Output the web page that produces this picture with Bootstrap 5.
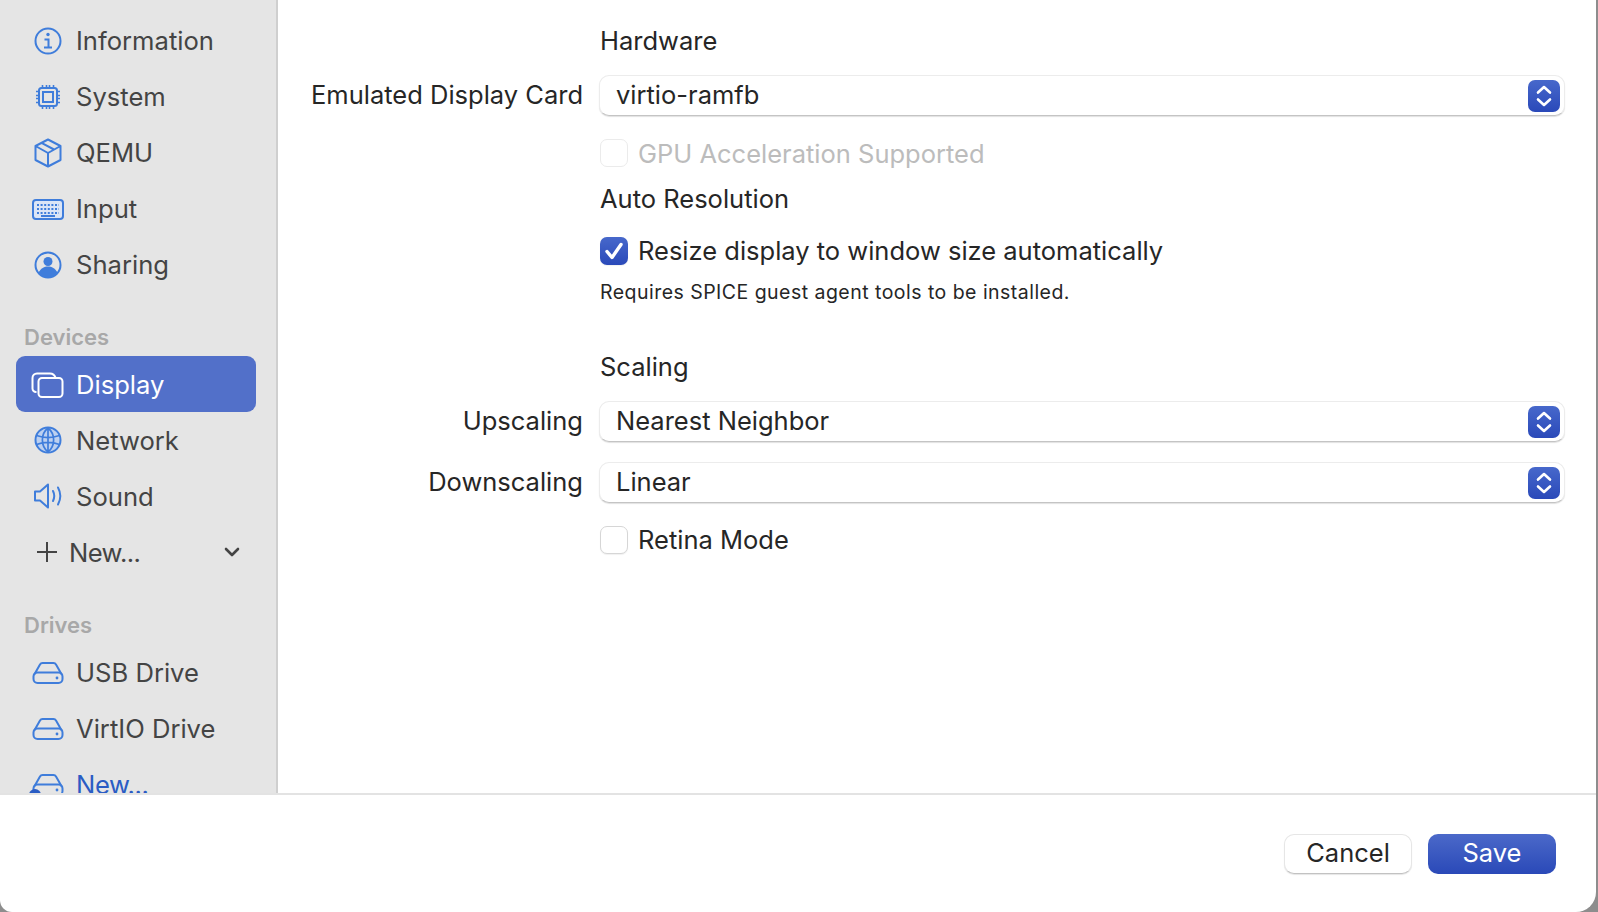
<!DOCTYPE html>
<html lang="en">
<head>
<meta charset="utf-8">
<title>Display settings</title>
<link href="https://cdn.jsdelivr.net/npm/bootstrap@5.3.0/dist/css/bootstrap.min.css" rel="stylesheet">
<style>
html,body{height:100%;}
body{background:#8d8d8d;font-family:Inter,"Liberation Sans",sans-serif;color:#262626;overflow:hidden;}
.win{width:1596px;height:912px;background:#fff;border-radius:0 0 20px 12px;overflow:hidden;}
.upper{height:793px;}
.side{width:278px;background:#e5e5e5;border-right:2px solid #cfcfcf;padding:13px 0 0 16px;overflow:hidden;flex:none;}
.side-item{height:56px;width:240px;border-radius:9px;color:#444;font-size:25.6px;flex:none;}
.side-item svg{width:64px;height:56px;flex:none;margin-right:-4px;fill:none;stroke:#3f7ddb;stroke-width:2;}
.side-item.low span{padding-top:2px;}
.side-item.on{background:#5270c9;color:#fff;}
.side-item.on svg{stroke:#fff;}
.side-item.addnew svg{stroke:#444;width:54px;margin-right:-1px;}
.side-item.addnew .chev{width:24px;height:24px;margin:0 12px 0 auto;stroke-width:2.6;}
.side-item.addnew span{letter-spacing:-.6px;}
.side-item.link{color:#2a5cc4;}
.side-item.link span{letter-spacing:-.4px;}
.side-head{height:20px;line-height:20px;font-size:22px;font-weight:600;color:#a8a8a8;padding-left:8px;}
.gap-dev{margin-top:34px;margin-bottom:9px;}
.gap-drv{margin-top:35px;margin-bottom:10px;}
.pane{padding-right:31px;min-width:0;}
.formgrid{display:grid;grid-template-columns:305px 1fr;column-gap:17px;}
.lbl{font-size:25.5px;text-align:right;line-height:40px;color:#262626;}
.ttl{font-size:25.5px;line-height:34px;grid-column:2;}
.form-select.macsel{width:calc(100% + 1px);height:41px;margin-left:-1px;padding:0 50px 2px 16px;font-size:25.5px;color:#262626;border:1px solid #ececec;border-bottom-color:#c4c4c4;border-radius:10px;box-shadow:0 1px 1px rgba(0,0,0,.12);
 background-color:#fff;background-size:32px 32px;background-position:right 4px center;background-repeat:no-repeat;
 background-image:url("data:image/svg+xml,%3Csvg xmlns='http://www.w3.org/2000/svg' viewBox='0 0 32 32'%3E%3Cdefs%3E%3ClinearGradient id='g' x2='0' y2='1'%3E%3Cstop offset='0' stop-color='%234768cb'/%3E%3Cstop offset='1' stop-color='%232a49b9'/%3E%3C/linearGradient%3E%3C/defs%3E%3Crect width='32' height='32' rx='7' fill='url(%23g)'/%3E%3Cpath d='M10 12.5l6-5.5 6 5.5M10 19.5l6 5.5 6-5.5' fill='none' stroke='%23fff' stroke-width='2.6' stroke-linecap='round' stroke-linejoin='round'/%3E%3C/svg%3E");}
.chk{grid-column:2;display:flex;align-items:center;gap:10px;font-size:25.5px;line-height:28px;margin:0;padding:0;min-height:0;}
.chk .form-check-input{width:28px;height:28px;margin:0;float:none;flex:none;border-radius:7px;border:1px solid #d6d6d6;background-color:#fff;box-shadow:0 1px 1px rgba(0,0,0,.06);}
.chk .form-check-input:checked{border:0;background-color:#2f50bf;background-size:28px 28px;
 background-image:url("data:image/svg+xml,%3Csvg xmlns='http://www.w3.org/2000/svg' viewBox='0 0 28 28'%3E%3Cdefs%3E%3ClinearGradient id='g' x2='0' y2='1'%3E%3Cstop offset='0' stop-color='%234768cb'/%3E%3Cstop offset='1' stop-color='%232a49b9'/%3E%3C/linearGradient%3E%3C/defs%3E%3Crect width='28' height='28' rx='7' fill='url(%23g)'/%3E%3Cpath d='M7 14.5l5 6 9-13' fill='none' stroke='%23fff' stroke-width='3.4' stroke-linecap='round' stroke-linejoin='round'/%3E%3C/svg%3E");}
.chk .form-check-input:disabled{opacity:1;border-color:#ebebeb;box-shadow:none;}
.chk .form-check-input:disabled ~ .dim{color:#bcbcbc;opacity:1;line-height:26px;padding-top:2px;}
.note{grid-column:2;font-size:19.5px;letter-spacing:.47px;line-height:24px;color:#262626;}
.m24{margin-top:24px}.m17{margin-top:17px}.m23{margin-top:23px}.m15{margin-top:15px}.m21{margin-top:21px}.m46{margin-top:46px}.m20{margin-top:20px}
.foot{height:119px;border-top:2px solid #e3e3e3;padding:39px 40px 0 0;gap:16px;}
.btn.macbtn{width:128px;height:40px;padding:0 0 2px;font-size:25.5px;line-height:36px;border-radius:10px;}
.btn.b-cancel{background:#fff;color:#262626;border:1px solid #e6e6e6;border-bottom-color:#c2c2c2;box-shadow:0 1px 1px rgba(0,0,0,.1);}
.btn.b-save{background:linear-gradient(#4b69c9,#2a49b8);color:#fff;border:0;}
</style>
</head>
<body>
<div class="win d-flex flex-column">
  <div class="upper d-flex">
    <nav class="side d-flex flex-column">
      <div class="side-item d-flex align-items-center">
        <svg viewBox="0 0 64 56"><circle cx="32" cy="28" r="12.500"/><circle cx="32" cy="21.500" r="1.700" fill="#3f7ddb" stroke="none"/><path d="M28.500 26.500h4V34M28 34.500h8"/></svg>
        <span>Information</span></div>
      <div class="side-item d-flex align-items-center">
        <svg viewBox="0 0 64 56"><rect x="23" y="19" width="18" height="18" rx="2.500"/><rect x="27" y="23" width="10" height="10" fill="none"/><path d="M26.500 16v3M30.500 16v3M33.500 16v3M37.500 16v3M26.500 37v3M30.500 37v3M33.500 37v3M37.500 37v3M20 22.500h3M20 26.500h3M20 29.500h3M20 33.500h3M41 22.500h3M41 26.500h3M41 29.500h3M41 33.500h3" stroke-width="1.600"/></svg>
        <span>System</span></div>
      <div class="side-item d-flex align-items-center">
        <svg viewBox="0 0 64 56" stroke-linejoin="round"><path d="M32 14.500l12.500 6.500v14L32 41.500 19.500 35V21zM19.500 21L32 28l12.500-7M32 28v13.500M25.500 17.800l12.500 6.700"/></svg>
        <span>QEMU</span></div>
      <div class="side-item d-flex align-items-center">
        <svg viewBox="0 0 64 56"><rect x="17" y="19" width="30" height="19" rx="3" fill="#dbe5f6"/><path d="M21 24h22M21 28h22M21 32h22" stroke-width="2" stroke-dasharray="2 1.600"/><path d="M25 35h14" stroke-width="2"/></svg>
        <span>Input</span></div>
      <div class="side-item d-flex align-items-center">
        <svg viewBox="0 0 64 56"><circle cx="32" cy="28" r="12.500"/><circle cx="32" cy="24.500" r="4.500" fill="#3f7ddb" stroke="none"/><path d="M22.500 36c2-5 6-6.500 9.500-6.500s7.500 1.500 9.500 6.500c-2.500 3-6 4.500-9.500 4.500s-7-1.500-9.500-4.500z" fill="#3f7ddb" stroke="none"/></svg>
        <span>Sharing</span></div>

      <div class="side-head gap-dev">Devices</div>
      <div class="side-item low on d-flex align-items-center">
        <svg viewBox="0 0 64 56"><path d="M20.500 36H20a3.500 3.500 0 0 1-3.500-3.500V22a4.500 4.500 0 0 1 4.500-4.500h13a6 6 0 0 1 5.500 4"/><rect x="22.500" y="22" width="24" height="19" rx="3.500"/></svg>
        <span>Display</span></div>
      <div class="side-item low d-flex align-items-center">
        <svg viewBox="0 0 64 56"><circle cx="32" cy="28" r="12.500" fill="#bcd0f0"/><path d="M20.500 23.500c7 2.500 16 2.500 23 0M20.500 32.500c7-2.500 16-2.500 23 0M32 16v24M32 16c-7.500 6-7.500 18 0 24M32 16c7.500 6 7.500 18 0 24" stroke-width="1.700"/></svg>
        <span>Network</span></div>
      <div class="side-item low d-flex align-items-center">
        <svg viewBox="0 0 64 56" stroke-linejoin="round" stroke-linecap="round"><path d="M19 23.500v9h5l8 7v-23l-8 7z"/><path d="M37 23c1.600 3.200 1.600 6.800 0 10M42 19.500c3 5.500 3 11.500 0 17" stroke-width="2"/></svg>
        <span>Sound</span></div>
      <div class="side-item low addnew d-flex align-items-center">
        <svg viewBox="0 0 54 56"><path d="M31 18v20M21 28h20"/></svg>
        <span>New...</span>
        <svg class="chev" viewBox="0 0 24 24"><path d="M6 9l6 6 6-6" stroke-linecap="round" stroke-linejoin="round"/></svg></div>

      <div class="side-head gap-drv">Drives</div>
      <div class="side-item d-flex align-items-center">
        <svg viewBox="0 0 64 56"><path d="M18 30l6-10.500a3 3 0 0 1 2.500-1.500h11a3 3 0 0 1 2.500 1.500L46 30"/><rect x="17.500" y="27.500" width="29" height="10.500" rx="4"/><circle cx="41" cy="33" r="1.400" fill="#3f7ddb" stroke="none"/></svg>
        <span>USB Drive</span></div>
      <div class="side-item d-flex align-items-center">
        <svg viewBox="0 0 64 56"><path d="M18 30l6-10.500a3 3 0 0 1 2.500-1.500h11a3 3 0 0 1 2.500 1.500L46 30"/><rect x="17.500" y="27.500" width="29" height="10.500" rx="4"/><circle cx="41" cy="33" r="1.400" fill="#3f7ddb" stroke="none"/></svg>
        <span>VirtIO Drive</span></div>
      <div class="side-item link d-flex align-items-center">
        <svg viewBox="0 0 64 56"><path d="M18 30l6-10.500a3 3 0 0 1 2.500-1.500h11a3 3 0 0 1 2.500 1.500L46 30"/><rect x="17.500" y="27.500" width="29" height="10.500" rx="4"/><circle cx="41" cy="33" r="1.400" fill="#3f7ddb" stroke="none"/><circle cx="19" cy="38" r="6" fill="#2a5cc4" stroke="none"/></svg>
        <span>New...</span></div>
    </nav>

    <main class="pane flex-grow-1">
      <form class="formgrid">
        <div class="ttl m24">Hardware</div>
        <label class="lbl m17" for="s1">Emulated Display Card</label>
        <select id="s1" class="form-select macsel m17"><option>virtio-ramfb</option></select>
        <label class="chk form-check m23"><input class="form-check-input" type="checkbox" disabled><span class="dim">GPU Acceleration Supported</span></label>
        <div class="ttl m15">Auto Resolution</div>
        <label class="chk form-check m21"><input class="form-check-input" type="checkbox" checked><span>Resize display to window size automatically</span></label>
        <div class="note m15">Requires SPICE guest agent tools to be installed.</div>
        <div class="ttl m46">Scaling</div>
        <label class="lbl m17" for="s2">Upscaling</label>
        <select id="s2" class="form-select macsel m17"><option>Nearest Neighbor</option></select>
        <label class="lbl m20" for="s3">Downscaling</label>
        <select id="s3" class="form-select macsel m20"><option>Linear</option></select>
        <label class="chk form-check m23"><input class="form-check-input" type="checkbox"><span>Retina Mode</span></label>
      </form>
    </main>
  </div>
  <footer class="foot d-flex justify-content-end align-items-start">
    <button type="button" class="btn macbtn b-cancel">Cancel</button>
    <button type="button" class="btn macbtn b-save">Save</button>
  </footer>
</div>
<script src="https://cdn.jsdelivr.net/npm/bootstrap@5.3.0/dist/js/bootstrap.bundle.min.js"></script>
</body>
</html>
